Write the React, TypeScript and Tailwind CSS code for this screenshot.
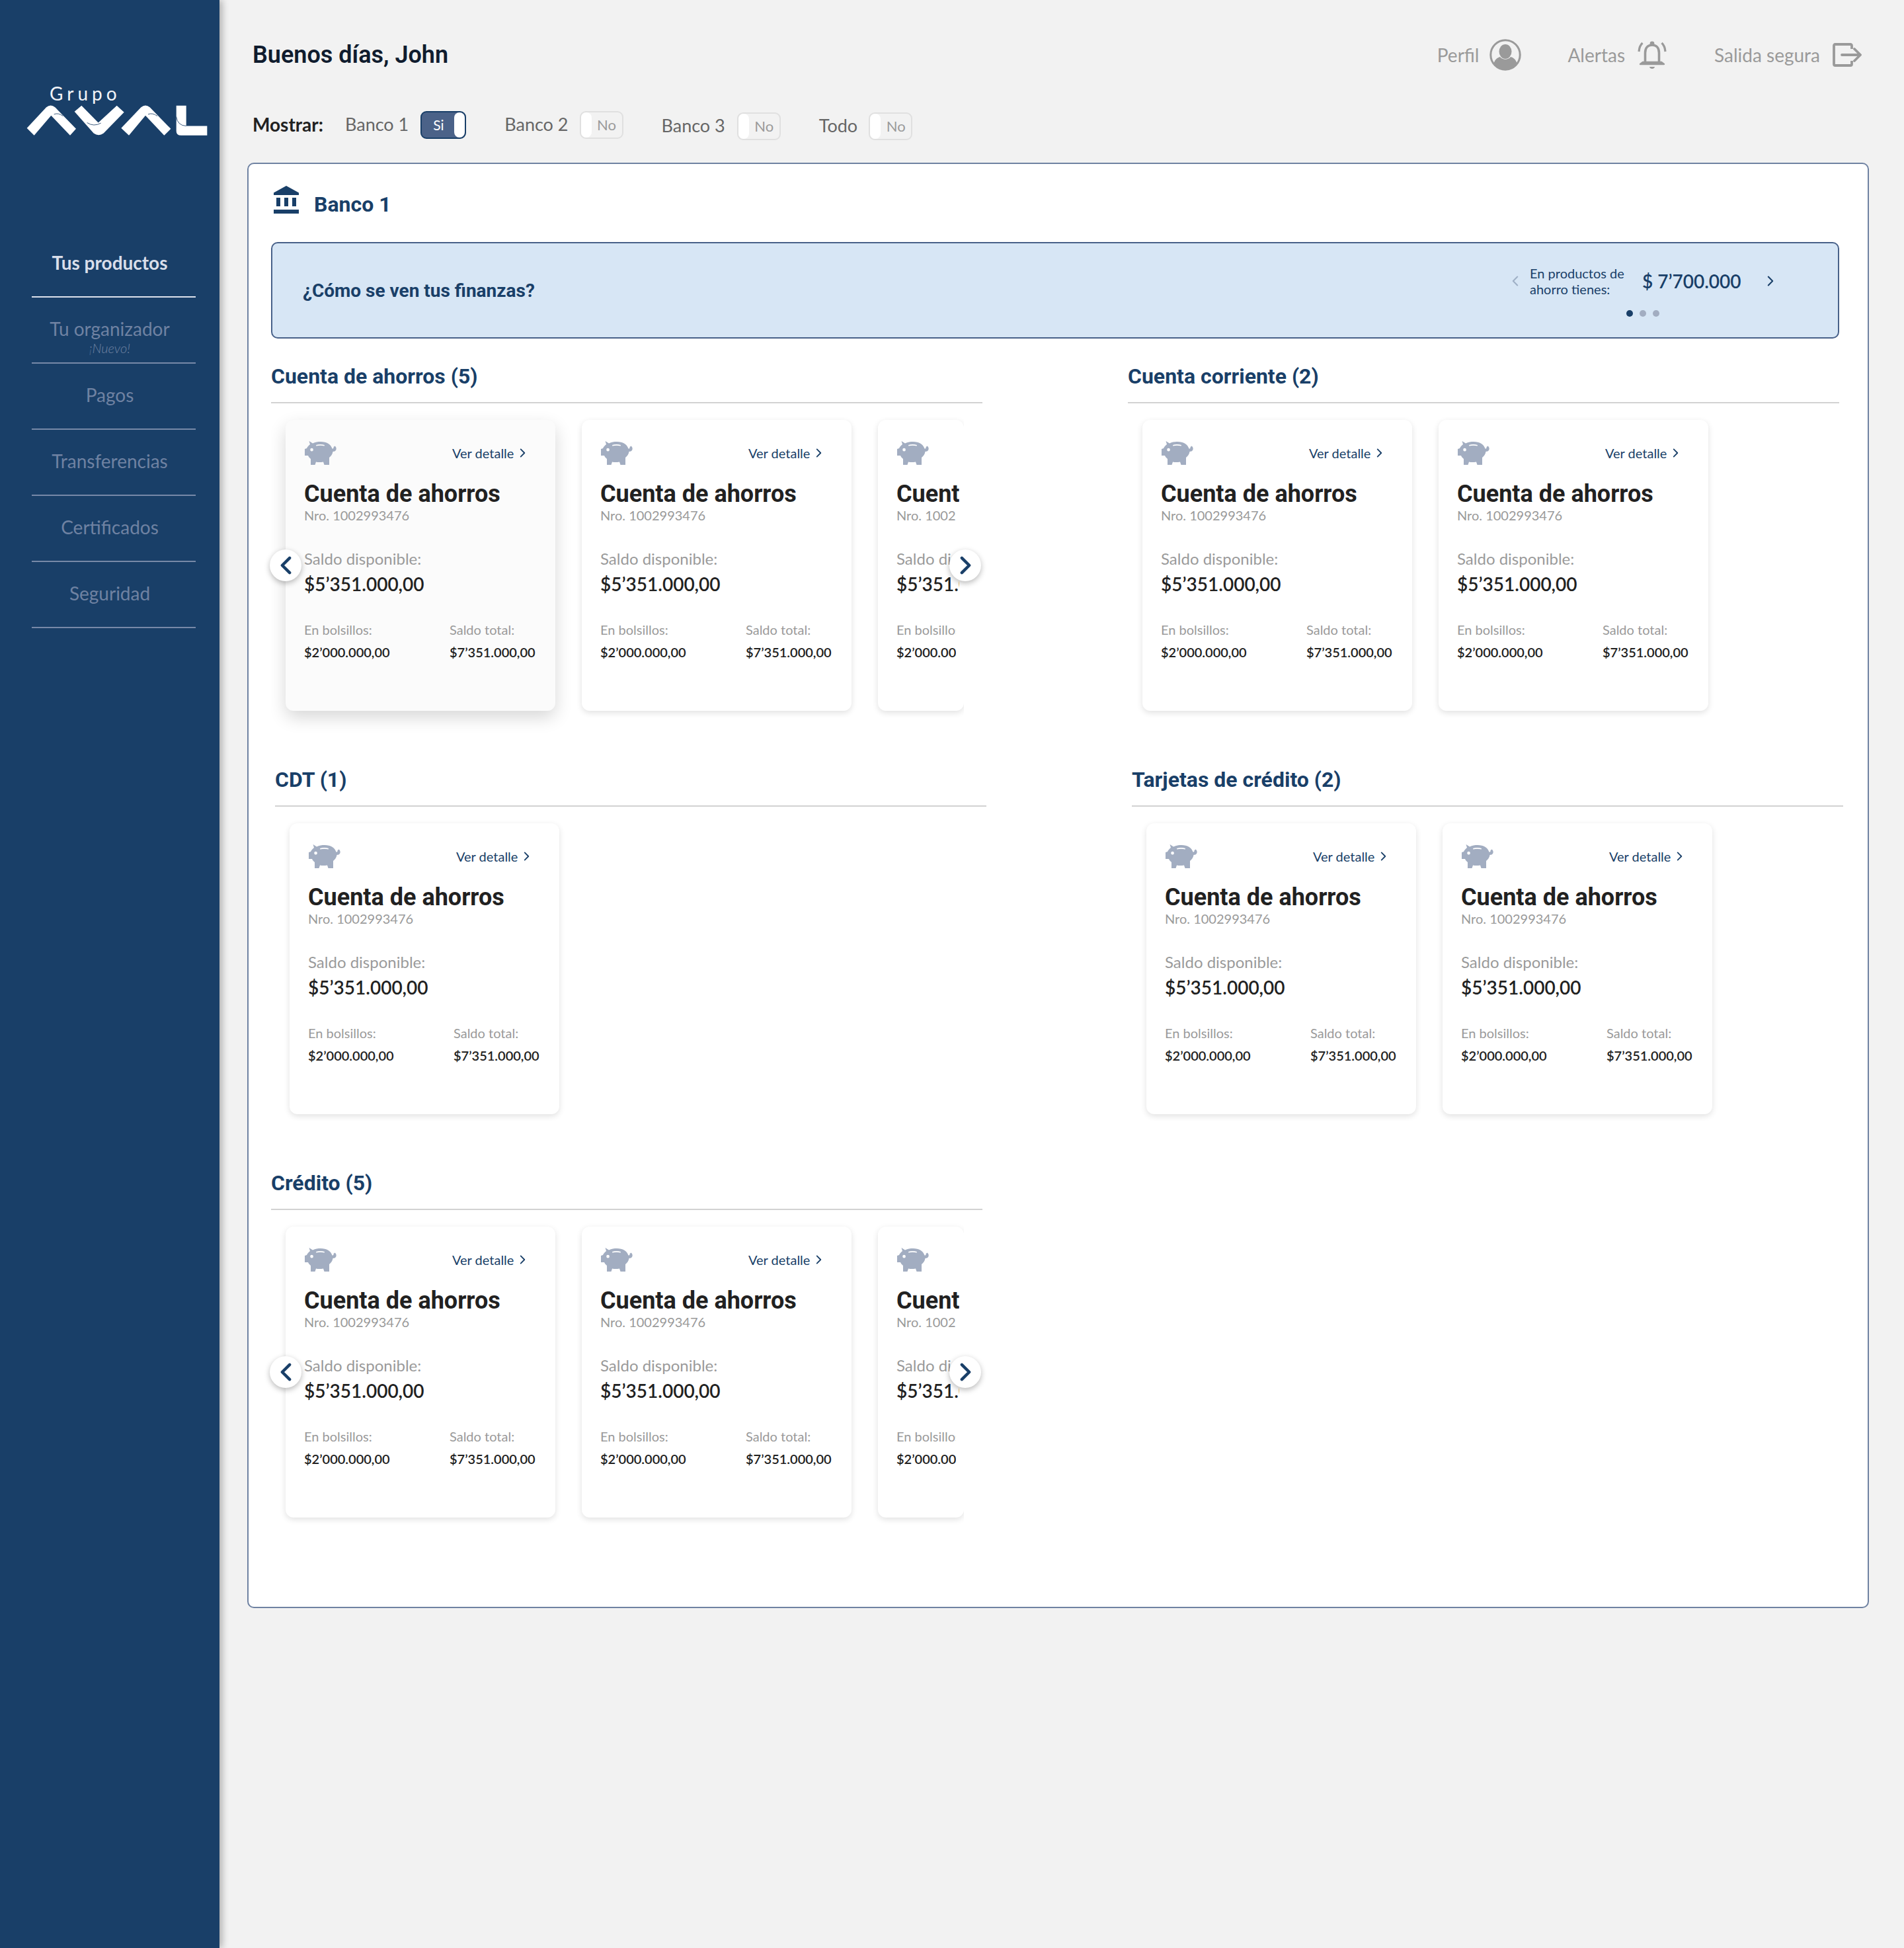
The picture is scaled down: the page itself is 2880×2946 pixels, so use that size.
const lato = "font-[Lato,sans-serif]";
const roboto = "font-[Roboto,sans-serif]";

function Chevron({ dir, className, weight = 2.6 }: { dir: "left" | "right"; className?: string; weight?: number }) {
  return (
    <svg viewBox="0 0 12 20" fill="none" className={className}>
      <path
        d={dir === "left" ? "M10 2 L2 10 L10 18" : "M2 2 L10 10 L2 18"}
        stroke="currentColor"
        strokeWidth={weight}
        strokeLinecap="round"
        strokeLinejoin="round"
      />
    </svg>
  );
}

function Logo() {
  return (
    <svg viewBox="0 0 960 170" className="h-[57px] w-[320px]" fill="#ffffff">
      <path d="M62 107 L150 12 Q170 -4 190 12 L285 110 L258 140 L172 50 L95 140 Z" />
      <path d="M278 32 L310 5 L386 82 L470 5 L503 35 L410 130 Q388 146 365 130 Z" />
      <path d="M490 107 L580 12 Q600 -4 620 12 L715 110 L685 140 L600 50 L525 140 Z" />
      <path d="M740 5 L785 5 L785 97 L880 97 L880 140 L762 140 Q740 140 740 120 Z" />
      <path d="M185 44 Q205 36 226 52" stroke="#193f68" strokeWidth="2.5" fill="none" />
      <path d="M335 82 Q365 102 398 84" stroke="#193f68" strokeWidth="2.5" fill="none" />
      <path d="M612 44 Q632 36 654 52" stroke="#193f68" strokeWidth="2.5" fill="none" />
      <path d="M740 55 Q745 95 785 97" stroke="#193f68" strokeWidth="2.5" fill="none" />
    </svg>
  );
}

function Sidebar() {
  const items = ["Tu organizador", "Pagos", "Transferencias", "Certificados", "Seguridad"];
  return (
    <aside className={`${lato} relative w-[332px] shrink-0 bg-[#193f68] shadow-[4px_0_10px_rgba(0,0,0,0.28)]`}>
      <div className="h-[349px] pt-[125px] pl-[20px]">
        <div className="pl-[55px] text-[28px] leading-[32px] tracking-[6px] text-[#f2f4f8]">Grupo</div>
        <div className="mt-[1px]">
          <Logo />
        </div>
      </div>
      <nav>
        <div className="h-[99px] pt-[30px] text-center text-[28px] leading-[36px] font-bold text-[#d9deea]">
          Tus productos
        </div>
        <div className="ml-[48px] h-[2px] w-[248px] bg-[#dde2ec]" />
        {items.map((item) => (
          <div key={item}>
            <div className="h-[98px] pt-[29px] text-center text-[28px] leading-[36px] text-[#6f82a2]">
              {item}
              {item === "Tu organizador" && (
                <div className="text-[20px] leading-[22px] font-light text-[#6f82a2] italic">¡Nuevo!</div>
              )}
            </div>
            <div className="ml-[48px] h-[2px] w-[248px] bg-[#7789a8]" />
          </div>
        ))}
      </nav>
    </aside>
  );
}

function UserIcon() {
  return (
    <svg viewBox="0 0 48 48" className="h-[48px] w-[48px]">
      <circle cx="24" cy="24" r="22.2" fill="none" stroke="#9a9a9a" strokeWidth="3" />
      <ellipse cx="24" cy="19" rx="9.5" ry="11" fill="#9a9a9a" />
      <path d="M6.5 37 C8 31 12 28 16 27 C20 32 28 32 32 27 C36 28 40 31 41.5 37 C37 43 31 46 24 46 C17 46 11 43 6.5 37 Z" fill="#9a9a9a" />
    </svg>
  );
}

function BellIcon() {
  return (
    <svg viewBox="0 0 44 44" className="h-[44px] w-[44px]" fill="none" stroke="#9a9a9a">
      <path d="M11.5 33 V19 C11.5 11 16 7 22 7 C28 7 32.5 11 32.5 19 V33" strokeWidth="3.6" />
      <path d="M4 36 L8 33 H36 L40 36 Z" fill="#9a9a9a" strokeWidth="2.4" strokeLinejoin="round" />
      <path d="M18 40 H26 C25.5 44 18.5 44 18 40 Z" fill="#9a9a9a" stroke="none" />
      <circle cx="22" cy="5" r="3.4" fill="#9a9a9a" stroke="none" />
      <path d="M7.5 4 C4 7 2.5 11 2 17" strokeWidth="3.2" />
      <path d="M36.5 4 C40 7 41.5 11 42 17" strokeWidth="3.2" />
    </svg>
  );
}

function ExitIcon() {
  return (
    <svg viewBox="0 0 44 36" className="h-[36px] w-[44px]" fill="none" stroke="#9a9a9a" strokeWidth="3.8">
      <path d="M29 9 V4 C29 2.5 28 2 27 2 H4 C2.5 2 2 3 2 4 V32 C2 33 2.5 34 4 34 H27 C28 34 29 33.5 29 32 V27" />
      <path d="M14 18 H41" strokeLinecap="round" />
      <path d="M33 9 L42 18 L33 27" strokeLinecap="round" strokeLinejoin="round" />
    </svg>
  );
}

function BankIcon() {
  return (
    <svg viewBox="0 0 38 42" className="h-[42px] w-[38px]" fill="#193f68">
      <path d="M19 0 L38 10.5 V14 H0 V10.5 Z" />
      <rect x="4" y="18" width="6" height="13" />
      <rect x="16" y="18" width="6" height="13" />
      <rect x="28" y="18" width="6" height="13" />
      <rect x="0" y="36" width="38" height="6" />
    </svg>
  );
}

function PigIcon() {
  return (
    <svg viewBox="0 0 48 36" className="h-[36px] w-[48px]" fill="#a2adc1">
      <path
        fillRule="evenodd"
        d="M6.5 0 L12 3.5 C16 1.5 20 1 24 1 C33 1 39.5 5 41.5 11.5 C43 12 44 10.5 43.5 9 L45.5 7.5 C48 9 48.5 13 46 15 C45 16 43.5 15.5 42.5 16 C42 20 39.5 23 37 25 V36 H29.5 L28 31.5 C24 32.3 20 32.3 17 31.5 L15.5 36 H9 V27 C7 25.5 6 24 5 22 H0 V12 L3 11 C4 8.5 6 6.5 8 5 Z M10.5 10.8 A2.3 2.3 0 1 0 10.6 15.4 A2.3 2.3 0 1 0 10.5 10.8 Z M17 6 C21 4.6 26 4.6 30 6 L29.6 7.6 C26 6.6 21 6.6 17.4 7.6 Z"
      />
    </svg>
  );
}

// the third card of a carousel shows only its left part, small rows end a bit earlier
function CardBody({ peek }: { peek?: boolean }) {
  const smallClip = peek ? "w-[90px] overflow-hidden" : "";
  return (
    <div className="h-[440px] w-[408px] pt-[32px] pl-[28px]">
      <div className="flex h-[36px] items-center">
        <span className="ml-[1px]"><PigIcon /></span>
        <div className={`${lato} -mt-[1px] ml-[175px] flex items-center text-[20px] whitespace-nowrap text-[#193f68]`}>
          Ver detalle
          <Chevron dir="right" className="ml-[9px] h-[14px] w-[9px]" />
        </div>
      </div>
      <div className={`${roboto} mt-[22px] text-[36px] leading-[44px] font-bold whitespace-nowrap text-[#212121]`}>
        Cuenta de ahorros
      </div>
      <div className={`${lato} ${smallClip} -mt-[2px] text-[20px] leading-[24px] whitespace-nowrap text-[#9a9a9a]`}>
        Nro. 1002993476
      </div>
      <div className={`${lato} mt-[38px] text-[24px] leading-[32px] whitespace-nowrap text-[#9a9a9a]`}>
        Saldo disponible:
      </div>
      <div className={`${lato} mt-[2px] text-[28px] leading-[40px] font-semibold whitespace-nowrap text-[#212121]`}>
        $5’351.000,00
      </div>
      <div className={`${lato} ${smallClip} mt-[35px] flex whitespace-nowrap`}>
        <div className="w-[220px] shrink-0">
          <div className="text-[20px] leading-[28px] text-[#9a9a9a]">En bolsillos:</div>
          <div className="mt-[6px] text-[20px] leading-[28px] font-semibold text-[#212121]">$2’000.000,00</div>
        </div>
        <div>
          <div className="text-[20px] leading-[28px] text-[#9a9a9a]">Saldo total:</div>
          <div className="mt-[6px] text-[20px] leading-[28px] font-semibold text-[#212121]">$7’351.000,00</div>
        </div>
      </div>
    </div>
  );
}

function Card({ active, peek }: { active?: boolean; peek?: boolean }) {
  const look = active
    ? "bg-[#fbfbfb] shadow-[0_10px_26px_rgba(0,0,0,0.16)]"
    : "bg-white shadow-[0_3px_10px_rgba(0,0,0,0.12)]";
  if (peek) {
    return (
      <div className={`h-[440px] w-[130px] shrink-0 rounded-[12px] ${look}`}>
        <div className="h-[440px] w-[123px] overflow-hidden">
          <CardBody peek />
        </div>
      </div>
    );
  }
  return (
    <div className={`h-[440px] w-[408px] shrink-0 rounded-[12px] ${look}`}>
      <CardBody />
    </div>
  );
}

function ArrowButton({ dir }: { dir: "left" | "right" }) {
  const place = dir === "left" ? "left-[-2px]" : "left-[1026px]";
  return (
    <button className={`absolute top-[221px] ${place} flex h-[48px] w-[48px] items-center justify-center rounded-full bg-white text-[#193f68] shadow-[0_3px_8px_rgba(0,0,0,0.28)]`}>
      <Chevron dir={dir} weight={3.2} className="h-[28px] w-[17px]" />
    </button>
  );
}

function Section({
  title,
  cards,
  carousel,
  shifted,
}: {
  title: string;
  cards: number;
  carousel?: boolean;
  shifted?: boolean;
}) {
  return (
    <section className={`w-[1076px] ${shifted ? "ml-[6px]" : ""}`}>
      <h3 className={`${roboto} h-[64px] border-b-2 border-[#d2d2d2] text-[32px] leading-[46px] font-bold text-[#193f68]`}>
        {title}
      </h3>
      <div className="relative">
        <div className="flex h-[500px] w-[1048px] gap-[40px] overflow-hidden pt-[25px] pl-[22px]">
          {carousel ? (
            <>
              <Card active={title === "Cuenta de ahorros (5)"} />
              <Card />
              <Card peek />
            </>
          ) : (
            Array.from({ length: cards }).map((_, i) => <Card key={i} />)
          )}
        </div>
        {carousel && (
          <>
            <ArrowButton dir="left" />
            <ArrowButton dir="right" />
          </>
        )}
      </div>
    </section>
  );
}

function Toggle({ on }: { on?: boolean }) {
  if (on) {
    return (
      <div className={`${lato} flex h-[42px] w-[69px] items-center rounded-[9px] border-2 border-[#193f68] bg-[#4b6288] text-[21px] text-white`}>
        <span className="w-[50px] pl-[2px] text-center">Si</span>
        <span className="h-[38px] w-[17px] rounded-[8px] bg-white" />
      </div>
    );
  }
  return (
    <div className={`${lato} flex h-[42px] w-[66px] items-center rounded-[9px] border-2 border-[#e0e0e0] text-[22px] text-[#9a9a9a]`}>
      <span className="h-[38px] w-[16px] rounded-[8px] bg-white" />
      <span className="w-[46px] text-center">No</span>
    </div>
  );
}

export default function App() {
  return (
    <div className="flex min-h-[2946px] bg-[#f2f2f2]">
      <Sidebar />
      <main className="flex-1 pl-[42px]">
        <header className="ml-[8px] flex h-[168px] items-start justify-between pr-[64px]">
          <h1 className={`${roboto} mt-[60px] text-[36px] leading-[46px] font-semibold text-[#101c2e]`}>
            Buenos días, John
          </h1>
          <div className={`${lato} mt-[59px] flex h-[48px] items-center text-[28px] text-[#9a9a9a]`}>
            <span>Perfil</span>
            <span className="ml-[16px]"><UserIcon /></span>
            <span className="ml-[70px]">Alertas</span>
            <span className="ml-[19px]"><BellIcon /></span>
            <span className="ml-[72px]">Salida segura</span>
            <span className="ml-[19px]"><ExitIcon /></span>
          </div>
        </header>

        <div className={`${lato} ml-[8px] flex h-[78px] items-start text-[27px] leading-[40px] text-[#666666]`}>
          <span className="text-[28px] font-bold text-[#212121]">Mostrar:</span>
          <span className="ml-[33px]">Banco 1</span>
          <span className="ml-[18px]"><Toggle on /></span>
          <span className="ml-[58px]">Banco 2</span>
          <span className="ml-[17px]"><Toggle /></span>
          <span className="mt-[2px] ml-[58px]">Banco 3</span>
          <span className="mt-[2px] ml-[18px]"><Toggle /></span>
          <span className="mt-[2px] ml-[58px]">Todo</span>
          <span className="mt-[2px] ml-[17px]"><Toggle /></span>
        </div>

        <div className="h-[2186px] w-[2453px] rounded-[10px] border-2 border-[#6f82a2] bg-white pt-[33px] pl-[34px]">
          <div className="flex h-[85px] items-start">
            <span className="ml-[4px]"><BankIcon /></span>
            <h2 className={`${roboto} ml-[23px] text-[32px] leading-[56px] font-bold text-[#193f68]`}>Banco 1</h2>
          </div>

          <div className="flex h-[146px] w-[2372px] items-center justify-between rounded-[10px] border-2 border-[#486189] bg-[#d7e6f5] pl-[46px]">
            <p className={`${roboto} mt-[2px] text-[28px] font-bold text-[#193f68]`}>¿Cómo se ven tus finanzas?</p>
            <div className={`${lato} flex w-[490px] flex-col pt-[2px] text-[#193f68]`}>
              <div className="flex items-center">
                <Chevron dir="left" className="-ml-[3px] mr-[3px] h-[16px] w-[10px] text-[#9fb0c6]" />
                <div className="ml-[14px] w-[170px] text-[20px] leading-[24px]">
                  En productos de
                  <br />
                  ahorro tienes:
                </div>
                <div className="text-[28px] leading-[40px] font-semibold">$ 7’700.000</div>
                <Chevron dir="right" className="ml-[39px] h-[16px] w-[10px]" />
              </div>
              <div className="mt-[20px] ml-[170px] flex gap-[10px]">
                <span className="h-[10px] w-[10px] rounded-full bg-[#193f68]" />
                <span className="h-[10px] w-[10px] rounded-full bg-[#a2adc1]" />
                <span className="h-[10px] w-[10px] rounded-full bg-[#a2adc1]" />
              </div>
            </div>
          </div>

          <div className="mt-[34px] grid w-[2372px] grid-cols-[1296px_1076px] auto-rows-[610px]">
            <Section title="Cuenta de ahorros (5)" cards={3} carousel />
            <Section title="Cuenta corriente (2)" cards={2} />
            <Section title="CDT (1)" cards={1} shifted />
            <Section title="Tarjetas de crédito (2)" cards={2} shifted />
            <Section title="Crédito (5)" cards={3} carousel />
          </div>
        </div>
      </main>
    </div>
  );
}
